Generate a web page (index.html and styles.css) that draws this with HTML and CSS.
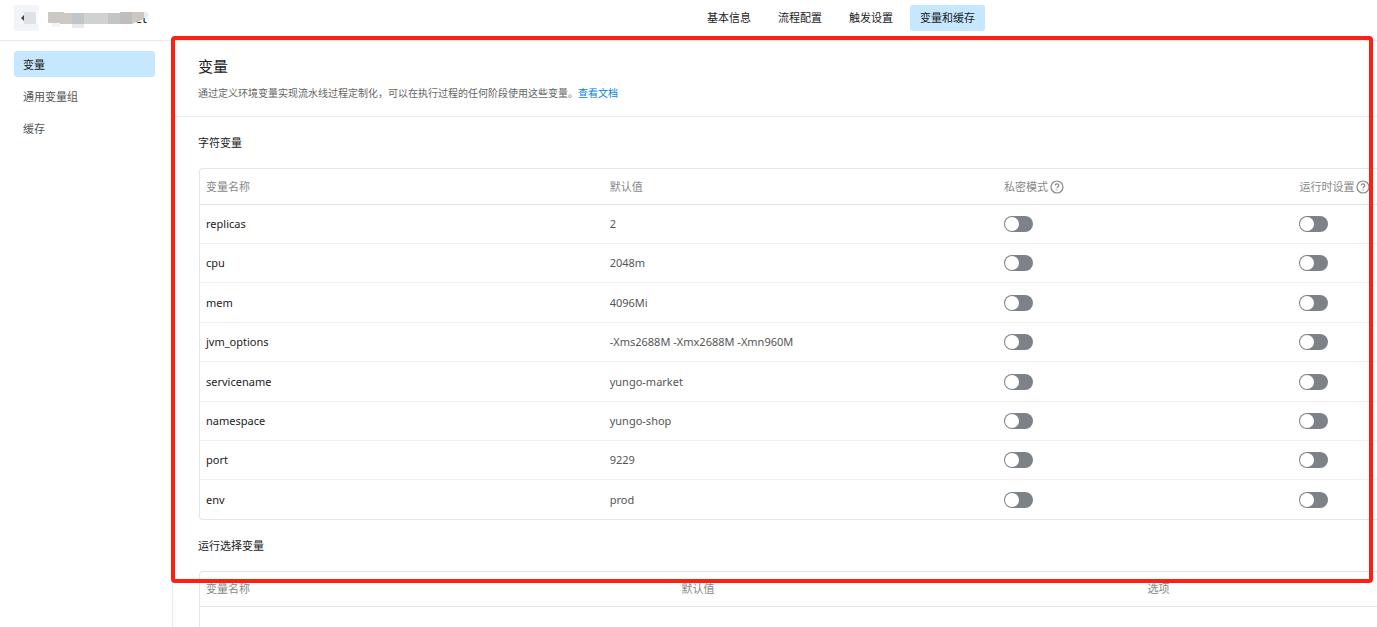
FILE: index.html
```html
<!DOCTYPE html>
<html lang="zh-CN">
<head>
<meta charset="utf-8">
<title>变量和缓存</title>
<link rel="stylesheet" href="styles.css">
</head>
<body>
<div class="page">
  <header class="topbar">
    <div class="brand">
      <button class="back" type="button" aria-label="返回">
        <svg width="26" height="26" viewBox="0 0 26 26"><path d="M7 13l3-3v6z" fill="#444"/><rect x="10" y="7" width="12" height="12" fill="#e0e1e4"/><rect x="22" y="6" width="4" height="13" fill="#fafcfe"/></svg>
      </button>
      <div class="project">
        <svg class="mask" width="102" height="18" viewBox="0 0 102 18">
          <rect x="0" y="3" width="16" height="11" fill="#cbc9c4"/>
          <rect x="4" y="14" width="8" height="4" fill="#f5f5f5"/>
          <rect x="12" y="4" width="12" height="11" fill="#d0c9c2"/>
          <rect x="24" y="4" width="12" height="11" fill="#c0c5ca"/>
          <rect x="24" y="15" width="12" height="4" fill="#e8e8e9"/>
          <rect x="36" y="4" width="24" height="11" fill="#d0d1d1"/>
          <rect x="60" y="4" width="12" height="11" fill="#c3c5c4"/>
          <rect x="72" y="3" width="12" height="12" fill="#c0bdbb"/>
          <path d="M84 3h12v6l-4 3-4 1-4 2z" fill="#cdc8c5"/>
          <path d="M96 3h3l2 3-2 3h-3z" fill="#e6edf4"/>
        </svg>
        <span class="project-name">et</span>
      </div>
    </div>
    <nav class="tabs">
      <a class="tab" href="#">基本信息</a>
      <a class="tab" href="#">流程配置</a>
      <a class="tab" href="#">触发设置</a>
      <a class="tab active" href="#">变量和缓存</a>
    </nav>
  </header>
  <div class="body">
    <aside class="side">
      <a class="side-link active" href="#">变量</a>
      <a class="side-link" href="#">通用变量组</a>
      <a class="side-link" href="#">缓存</a>
    </aside>
    <main class="main">
      <section class="intro">
        <h1>变量</h1>
        <p>通过定义环境变量实现流水线过程定制化，可以在执行过程的任何阶段使用这些变量。<a href="#">查看文档</a></p>
      </section>
      <section class="group">
        <h2>字符变量</h2>
        <div class="frame">
          <table class="vars">
            <colgroup><col class="c-name"><col class="c-value"><col class="c-secret"><col></colgroup>
            <thead><tr><th>变量名称</th><th>默认值</th>
              <th><span class="with-help">私密模式<svg class="help" viewBox="0 0 14 14"><circle cx="7" cy="7" r="6"/><path d="M5.2 5.6c0-2.4 3.6-2.4 3.6-.1 0 1.3-1.8 1.3-1.8 2.7M7 9.4v1.2"/></svg></span></th>
              <th><span class="with-help">运行时设置<svg class="help" viewBox="0 0 14 14"><circle cx="7" cy="7" r="6"/><path d="M5.2 5.6c0-2.4 3.6-2.4 3.6-.1 0 1.3-1.8 1.3-1.8 2.7M7 9.4v1.2"/></svg></span></th></tr></thead>
            <tbody>
              <tr><td>replicas</td><td>2</td><td><input type="checkbox" class="switch" aria-label="replicas 私密模式"></td><td><input type="checkbox" class="switch" aria-label="replicas 运行时设置"></td></tr>
              <tr><td>cpu</td><td>2048m</td><td><input type="checkbox" class="switch" aria-label="cpu 私密模式"></td><td><input type="checkbox" class="switch" aria-label="cpu 运行时设置"></td></tr>
              <tr class="tall"><td>mem</td><td>4096Mi</td><td><input type="checkbox" class="switch" aria-label="mem 私密模式"></td><td><input type="checkbox" class="switch" aria-label="mem 运行时设置"></td></tr>
              <tr><td>jvm_options</td><td>-Xms2688M -Xmx2688M -Xmn960M</td><td><input type="checkbox" class="switch" aria-label="jvm_options 私密模式"></td><td><input type="checkbox" class="switch" aria-label="jvm_options 运行时设置"></td></tr>
              <tr class="tall"><td>servicename</td><td>yungo-market</td><td><input type="checkbox" class="switch" aria-label="servicename 私密模式"></td><td><input type="checkbox" class="switch" aria-label="servicename 运行时设置"></td></tr>
              <tr><td>namespace</td><td>yungo-shop</td><td><input type="checkbox" class="switch" aria-label="namespace 私密模式"></td><td><input type="checkbox" class="switch" aria-label="namespace 运行时设置"></td></tr>
              <tr><td>port</td><td>9229</td><td><input type="checkbox" class="switch" aria-label="port 私密模式"></td><td><input type="checkbox" class="switch" aria-label="port 运行时设置"></td></tr>
              <tr><td>env</td><td>prod</td><td><input type="checkbox" class="switch" aria-label="env 私密模式"></td><td><input type="checkbox" class="switch" aria-label="env 运行时设置"></td></tr>
            </tbody>
          </table>
        </div>
      </section>
      <section class="group">
        <h2>运行选择变量</h2>
        <div class="frame open">
          <table class="vars">
            <colgroup><col class="c-choice"><col class="c-default"><col></colgroup>
            <thead><tr><th>变量名称</th><th>默认值</th><th>选项</th></tr></thead>
          </table>
        </div>
      </section>
    </main>
  </div>
  <div class="highlight"></div>
</div>
</body>
</html>
```

FILE: styles.css
```css
* { box-sizing: border-box; }
body {
  margin: 0;
  background: #fff;
  color: #222;
  font: 11px/16px "Noto Sans", "Noto Sans CJK SC", sans-serif;
}
a { color: inherit; text-decoration: none; }
.page {
  position: relative;
  display: flex;
  flex-direction: column;
  height: 100vh;
  overflow: hidden;
}
.topbar {
  display: flex;
  align-items: flex-start;
  justify-content: space-between;
  height: 41px;
  flex: none;
  padding: 5px 392px 0 14px;
  border-bottom: 1px solid #e8eaed;
}
.brand { display: flex; align-items: center; gap: 9px; }
.back {
  width: 25px;
  height: 26px;
  padding: 0;
  border: 0;
  border-radius: 3px;
  background: #f1f4f8;
  overflow: hidden;
}
.back svg { display: block; }
.project { position: relative; width: 102px; height: 18px; }
.project-name { position: absolute; right: 3px; top: 0; color: #222; font-size: 13px; line-height: 18px; }
.mask { position: absolute; left: 0; top: 0; z-index: 1; overflow: visible; }
.tabs { display: flex; gap: 7px; }
.tab { padding: 5px 10px; border-radius: 3px; white-space: nowrap; }
.active { background: #c5e7ff; }
.body { display: flex; flex: 1; min-height: 0; }
.side {
  display: flex;
  flex-direction: column;
  gap: 6px;
  width: 173px;
  flex: none;
  padding: 10px 17px 0 14px;
  border-right: 1px solid #e8eaed;
}
.side-link { padding: 6px 9px 4px; border-radius: 3px; color: #555; }
.side-link.active { color: #222; }
.main { flex: 1; min-width: 0; overflow: hidden; }
.intro { padding: 15px 25px; border-bottom: 1px solid #e8eaed; }
h1 { margin: 0 0 9px; font-size: 15px; line-height: 20px; font-weight: 400; }
.intro p { margin: 0; font-size: 10px; line-height: 16px; color: #666; }
.intro a { color: #0084db; }
.group { padding: 18px 0 0 26px; }
h2 { margin: 0 0 17px -1px; font-size: 11px; line-height: 16px; font-weight: 400; }
.frame {
  border: 1px solid #e5e5e5;
  border-right: 0;
  border-radius: 4px 0 0 4px;
}
.frame.open { border-bottom: 0; border-radius: 4px 0 0 0; height: 100px; }
.frame.open th { height: 35px; }
.vars { width: 100%; table-layout: fixed; border-collapse: separate; border-spacing: 0; }
.c-name { width: 34.3%; }
.c-value { width: 33.5%; }
.c-secret { width: 25.1%; }
.c-choice { width: 40.4%; }
.c-default { width: 39.6%; }
th, td { padding: 0 6px; text-align: left; font-weight: 400; white-space: nowrap; vertical-align: middle; }
th { height: 36px; color: #888; border-bottom: 1px solid #e5e5e5; }
td { height: 39px; color: #555; border-bottom: 1px solid #f1f1f1; }
td:first-child { color: #222; }
.tall td { height: 40px; }
tbody tr:last-child td { border-bottom: 0; }
.with-help { display: flex; align-items: center; gap: 2px; }
.help { width: 14px; height: 14px; flex: none; fill: none; stroke: #888; stroke-width: 1.2; }
.switch {
  appearance: none;
  display: block;
  width: 29px;
  height: 16px;
  margin: 0;
  padding: 1px;
  border-radius: 8px;
  background: #7d8188;
}
.switch::before { content: ""; display: block; width: 14px; height: 14px; border-radius: 50%; background: #fff; }
.switch:checked::before { margin-left: auto; }
.highlight {
  position: absolute;
  inset: 36px 4px 44px 171px;
  border: 4px solid #ff1e12;
  border-radius: 4px;
  pointer-events: none;
}
```
